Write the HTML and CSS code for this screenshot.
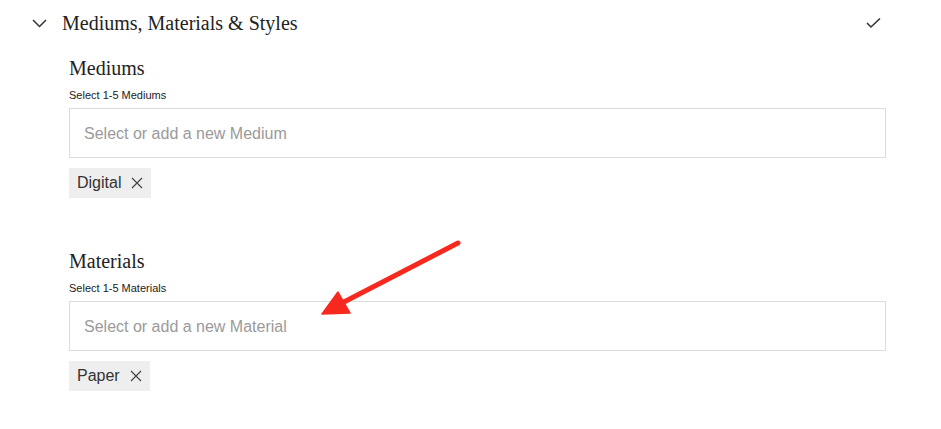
FILE: index.html
```html
<!DOCTYPE html>
<html>
<head>
<meta charset="utf-8">
<link rel="stylesheet" href="styles.css">
</head>
<body>
<div class="panel">
  <div class="header">
    <div class="header-left">
      <svg class="chevron" width="15" height="9" viewBox="0 0 15 9"><path d="M1 1 L7.5 7.5 L14 1" fill="none" stroke="#333" stroke-width="1.5"/></svg>
      <span class="title">Mediums, Materials &amp; Styles</span>
    </div>
    <svg class="check" width="15" height="12" viewBox="0 0 15 12"><path d="M1 6 L5 10 L14 1.5" fill="none" stroke="#333" stroke-width="1.6"/></svg>
  </div>
  <div class="body">
    <div class="field">
      <h3 class="field-title">Mediums</h3>
      <div class="hint">Select 1-5 Mediums</div>
      <div class="input">Select or add a new Medium</div>
      <div class="tags">
        <span class="tag">Digital<svg class="x" width="12" height="12" viewBox="0 0 12 12"><path d="M1 1 L11 11 M11 1 L1 11" stroke="#444" stroke-width="1.2"/></svg></span>
      </div>
    </div>
    <div class="field second">
      <h3 class="field-title">Materials</h3>
      <div class="hint">Select 1-5 Materials</div>
      <div class="input">Select or add a new Material</div>
      <div class="tags">
        <span class="tag">Paper<svg class="x" width="12" height="12" viewBox="0 0 12 12"><path d="M1 1 L11 11 M11 1 L1 11" stroke="#444" stroke-width="1.2"/></svg></span>
      </div>
    </div>
  </div>
  <svg class="arrow" width="941" height="429" viewBox="0 0 941 429">
    <line x1="458" y1="243" x2="342" y2="303" stroke="#f7291f" stroke-width="5" stroke-linecap="round"/>
    <polygon points="322,314 338,292 350,313" fill="#f7291f" stroke="#f7291f" stroke-width="1.5" stroke-linejoin="round"/>
  </svg>
</div>
</body>
</html>
```
FILE: styles.css
```css
html, body {
  margin: 0;
  padding: 0;
  background: #fff;
}
.panel {
  position: relative;
  width: 941px;
  height: 429px;
  overflow: hidden;
  font-family: "Liberation Sans", Arial, sans-serif;
  color: #222;
}
.header {
  display: flex;
  justify-content: space-between;
  align-items: center;
  padding: 11px 60px 0 32px;
  height: 24px;
}
.header-left {
  display: flex;
  align-items: center;
}
.chevron {
  display: block;
  margin-right: 15px;
}
.title {
  font-family: "Liberation Serif", "Times New Roman", serif;
  font-size: 20px;
  line-height: 24px;
  color: #222;
}
.check {
  display: block;
  margin-top: -1px;
}
.body {
  padding: 0 55px 0 69px;
}
.field-title {
  margin: 21px 0 0 0;
  font-family: "Liberation Serif", "Times New Roman", serif;
  font-weight: normal;
  font-size: 20px;
  line-height: 24px;
  color: #222;
}
.second .field-title {
  margin-top: 51px;
}
.hint {
  margin-top: 9px;
  font-size: 11px;
  line-height: 13px;
  color: #222;
}
.input {
  margin-top: 6px;
  height: 48px;
  border: 1px solid #dcdcdc;
  display: flex;
  align-items: center;
  padding: 2px 0 0 14px;
  box-sizing: content-box;
  height: 46px;
  font-size: 16px;
  color: #9a9a9a;
}
.tags {
  display: flex;
  margin-top: 10px;
}
.tag {
  display: inline-flex;
  align-items: center;
  height: 30px;
  padding: 0 8px;
  background: #eeeeee;
  font-size: 16px;
  color: #333;
}
.x {
  display: block;
  margin-left: 10px;
}
.arrow {
  position: absolute;
  left: 0;
  top: 0;
  pointer-events: none;
}
```
